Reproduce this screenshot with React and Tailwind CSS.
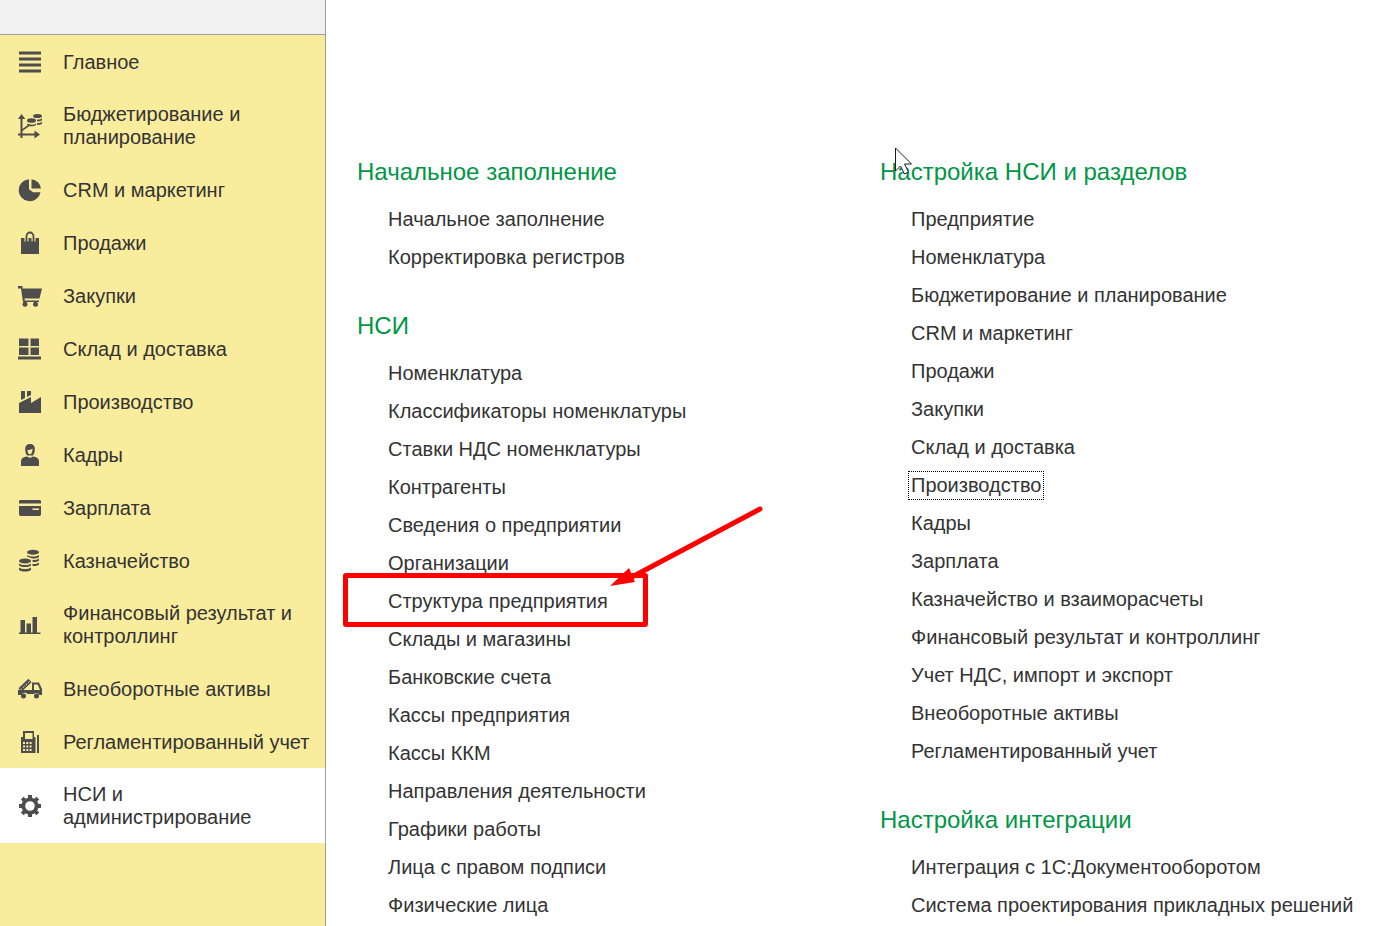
import React from 'react';

const BarsIcon = () => (
    <path d="M1 1.500h22v3H1zM1 7.500h22v3H1zM1 13.500h22v3H1zM1 19.500h22v3H1z" />
);

const BudgetIcon = () => (
    <>
        <path d="M3.500 0l3.800 5H4.500v10l4-3 4-2v1.500l-4 2.500-4 3V19.500h12v-3l5.500 4-5.500 4v-3h-12V24h-2v-2.500H0v-2h2.500V5H0z" />
        <ellipse cx="19.500" cy="2" rx="4.500" ry="2" />
        <path d="M19 5.500c2 .3 4-.2 5-1.500v2c-1 1.300-3 1.600-5 1.300zM19 9c2 .3 4-.2 5-1.500v2c-1 1.300-3 1.600-5 1.300z" />
        <ellipse cx="13.500" cy="6.500" rx="4.500" ry="2.300" />
        <path d="M9 9.500c2.500 1.700 6.500 1.700 9 0V11c-2.500 1.700-6.500 1.700-9 0z" />
    </>
);

const PieIcon = () => (
    <>
        <path d="M11 1.200a11 11 0 1 0 11.500 13H15l-4-3z" />
        <path d="M13.500 1.200a10.500 10.500 0 0 1 9.500 9.300h-9.500z" />
    </>
);

const BagIcon = () => (
    <>
        <path d="M3 7h18v16H3z" />
        <path d="M8.500 10.500V5.500a3.500 4 0 0 1 7 0v5" fill="none" stroke="#faec9d" strokeWidth="4" />
        <path d="M8.500 11V5.500a3.500 4 0 0 1 7 0V11" fill="none" stroke="#4d4d4d" strokeWidth="1.800" />
    </>
);

const CartIcon = () => (
    <>
        <path d="M0 2h4.500v2.500H24L21.500 14.500H6.500l.3 2H21V18H5L3 4.500H0z" />
        <circle cx="7" cy="20.300" r="2.500" />
        <circle cx="17.500" cy="20.300" r="2.500" />
    </>
);

const PalletIcon = () => (
    <path d="M1 1.500h9.500V9H1zM12.500 1.500H21V9h-8.500zM1 10.500h9.500V18H1zM12.500 10.500H21V18h-8.500zM0 19.500h23v3H0z" />
);

const FactoryIcon = () => (
    <>
        <path d="M1 13l12-6v6l10-6v16H1z" />
        <path d="M3 1h4v7l-4 2zM9 1h4v4L9 7z" />
    </>
);

const PersonIcon = () => (
    <>
        <path d="M7.200 6C7.200 2.500 9 1 12 1s4.800 1.500 4.800 5c0 3-.5 5-2 6.500H9.200c-1.500-1.500-2-3.500-2-6.500z" />
        <path d="M3 23v-4.500c0-3 2-4.500 6-5 1.500 1.500 4.500 1.500 6 0 4 .5 6 2 6 5V23z" />
        <path d="M9.500 7c2 0 3.500-.5 5-1.500 0 3-.8 5.800-2.500 5.800S9.500 9.500 9.500 7z" fill="#faec9d" />
    </>
);

const CardIcon = () => (
    <path d="M2 4h20l1 1v2.500H1V5zM1 10h22v8.500l-1 1.500H2l-1-1.500zM14.500 12.500V14H21v-1.500z" fillRule="evenodd" />
);

const CoinsIcon = () => (
    <>
        <ellipse cx="15" cy="3.200" rx="6" ry="2.500" />
        <path d="M9 6c3 2 9 2 12 0v2c-2 1.500-5 1.700-7.500 1.300L9 7.500zM14.500 11c2.500.2 5-.3 6.500-1.500v2c-1.500 1.300-4 1.700-6.500 1.500zM14.500 15c2.500.2 5-.3 6.500-1.500v2c-1.500 1.300-4 1.700-6.500 1.500z" />
        <ellipse cx="7" cy="12" rx="6" ry="2.500" />
        <path d="M1 14.500c3 2 9 2 12 0v2c-3 2-9 2-12 0zM1 18.500c3 2 9 2 12 0v2.500c-3 2-9 2-12 0z" />
    </>
);

const ChartIcon = () => (
    <path d="M2.500 7H7v12.500h1.500V10.500H13v9h1.500V4H19v15.500h3.500V21H1v-1.500h1.500z" />
);

const TruckIcon = () => (
    <>
        <path d="M2 13L12 3.500" stroke="#4d4d4d" strokeWidth="4.500" />
        <path d="M2.500 13l9-8.500" stroke="#faec9d" strokeWidth="1" strokeDasharray="2 1.500" />
        <path d="M0 13h14V5.500h7l3 6.500v6h-2.500a3.500 3.500 0 0 0-5.500-1h-6.500a3.500 3.500 0 0 0-6 1H0zM16 7.500V13h6l-2.300-5.500z" fillRule="evenodd" />
        <circle cx="5.500" cy="19" r="2.500" />
        <circle cx="18.500" cy="19" r="2.500" />
    </>
);

const RegisterIcon = () => (
    <>
        <path d="M5 1h11v6h1.500v16H3V7h2zM7 3v6h7.500V3z" fillRule="evenodd" />
        <path d="M5 12h2v2H5zM8.300 12h2v2h-2zM11.600 12h2v2h-2zM5 15.500h2v2H5zM8.300 15.500h2v2h-2zM11.600 15.500h2v2h-2zM5 19h2v2H5zM8.300 19h2v2h-2zM11.600 19h2v2h-2z" fill="#faec9d" />
        <path d="M19 5h2v18h-2z" />
    </>
);

const GearIcon = () => (
    <>
        <circle cx="12" cy="12" r="6.700" fill="none" stroke="#4d4d4d" strokeWidth="3.800" />
        <path
            d="M12 1v4M12 19v4M1 12h4M19 12h4M4.200 4.200l3 3M16.800 16.800l3 3M4.200 19.800l3-3M16.800 7.200l3-3"
            stroke="#4d4d4d"
            strokeWidth="4"
        />
    </>
);

const sections = [
    { title: 'Главное', Icon: BarsIcon },
    { title: 'Бюджетирование и планирование', Icon: BudgetIcon },
    { title: 'CRM и маркетинг', Icon: PieIcon },
    { title: 'Продажи', Icon: BagIcon },
    { title: 'Закупки', Icon: CartIcon },
    { title: 'Склад и доставка', Icon: PalletIcon },
    { title: 'Производство', Icon: FactoryIcon },
    { title: 'Кадры', Icon: PersonIcon },
    { title: 'Зарплата', Icon: CardIcon },
    { title: 'Казначейство', Icon: CoinsIcon },
    { title: 'Финансовый результат и контроллинг', Icon: ChartIcon },
    { title: 'Внеоборотные активы', Icon: TruckIcon },
    { title: 'Регламентированный учет', Icon: RegisterIcon },
    { title: 'НСИ и администрирование', Icon: GearIcon, active: true },
];

const leftGroups = [
    { title: 'Начальное заполнение', items: ['Начальное заполнение', 'Корректировка регистров'] },
    {
        title: 'НСИ',
        marked: 'Структура предприятия',
        items: [
            'Номенклатура',
            'Классификаторы номенклатуры',
            'Ставки НДС номенклатуры',
            'Контрагенты',
            'Сведения о предприятии',
            'Организации',
            'Структура предприятия',
            'Склады и магазины',
            'Банковские счета',
            'Кассы предприятия',
            'Кассы ККМ',
            'Направления деятельности',
            'Графики работы',
            'Лица с правом подписи',
            'Физические лица',
        ],
    },
];

const rightGroups = [
    {
        title: 'Настройка НСИ и разделов',
        pointer: true,
        focused: 'Производство',
        items: [
            'Предприятие',
            'Номенклатура',
            'Бюджетирование и планирование',
            'CRM и маркетинг',
            'Продажи',
            'Закупки',
            'Склад и доставка',
            'Производство',
            'Кадры',
            'Зарплата',
            'Казначейство и взаиморасчеты',
            'Финансовый результат и контроллинг',
            'Учет НДС, импорт и экспорт',
            'Внеоборотные активы',
            'Регламентированный учет',
        ],
    },
    {
        title: 'Настройка интеграции',
        items: ['Интеграция с 1С:Документооборотом', 'Система проектирования прикладных решений'],
    },
];

function Sidebar() {
    return (
        <aside className="w-[326px] shrink-0 border-r border-[#9e9e9e] bg-[#faec9d]">
            <div className="h-[35px] border-b border-[#9e9e9e] bg-[#f1f1f1]" />
            <nav>
                {sections.map(({ title, Icon, active }) => (
                    <a
                        key={title}
                        href="#"
                        className={`flex min-h-[53px] items-center gap-[21px] pt-[15px] pr-2 pb-[14px] pl-[18px] leading-[23px] ${active ? 'bg-white' : ''}`}
                    >
                        <svg viewBox="0 0 24 24" className="h-6 w-6 shrink-0 overflow-visible fill-[#4d4d4d]" aria-hidden="true">
                            <Icon />
                        </svg>
                        <span>{title}</span>
                    </a>
                ))}
            </nav>
        </aside>
    );
}

// Red frame with an arrow that points at the link
function Marker() {
    return (
        <>
            <span className="pointer-events-none absolute -top-[9px] -left-[45px] h-[54px] w-[305px] rounded-[3px] border-5 border-[#ff0000]" />
            <svg
                viewBox="0 0 160 90"
                className="pointer-events-none absolute -top-[80px] left-[220px] h-[90px] w-[160px]"
                aria-hidden="true"
            >
                <path d="M152 7L22 76" stroke="#ff0000" strokeWidth="5" strokeLinecap="round" />
                <path d="M2 84L21 66L27 80Z" fill="#ff0000" />
            </svg>
        </>
    );
}

function Pointer() {
    return (
        <svg viewBox="0 0 20 30" className="pointer-events-none absolute -top-[9px] left-[14px] h-[30px] w-5" aria-hidden="true">
            <path
                d="M1.500 1v23l5-5 4 8 4-2-4-8h7z"
                fill="#ffffff"
                stroke="#1a1a2a"
                strokeWidth="1"
            />
        </svg>
    );
}

function Group({ group }) {
    return (
        <section>
            <h2 className="relative mb-3 text-2xl leading-8 text-[#009646]">
                {group.title}
                {group.pointer && <Pointer />}
            </h2>
            <ul className="pl-[31px]">
                {group.items.map((item) => (
                    <li key={item} className="relative flex h-[38px] items-center">
                        <a
                            href="#"
                            className={item === group.focused ? 'outline-1 outline-offset-2 outline-dotted outline-black' : ''}
                        >
                            {item}
                        </a>
                        {item === group.marked && <Marker />}
                    </li>
                ))}
            </ul>
        </section>
    );
}

function Column({ groups }) {
    return (
        <div className="flex flex-col gap-[34px] pl-[31px]">
            {groups.map((group) => (
                <Group key={group.title} group={group} />
            ))}
        </div>
    );
}

export default function App() {
    return (
        <div className="flex min-h-screen bg-white font-['Liberation_Sans',Arial,sans-serif] text-[20px] leading-[23px] text-[#333333]">
            <Sidebar />
            <main className="grid flex-1 grid-cols-2 pt-[156px] pr-[3px]">
                <Column groups={leftGroups} />
                <Column groups={rightGroups} />
            </main>
        </div>
    );
}
